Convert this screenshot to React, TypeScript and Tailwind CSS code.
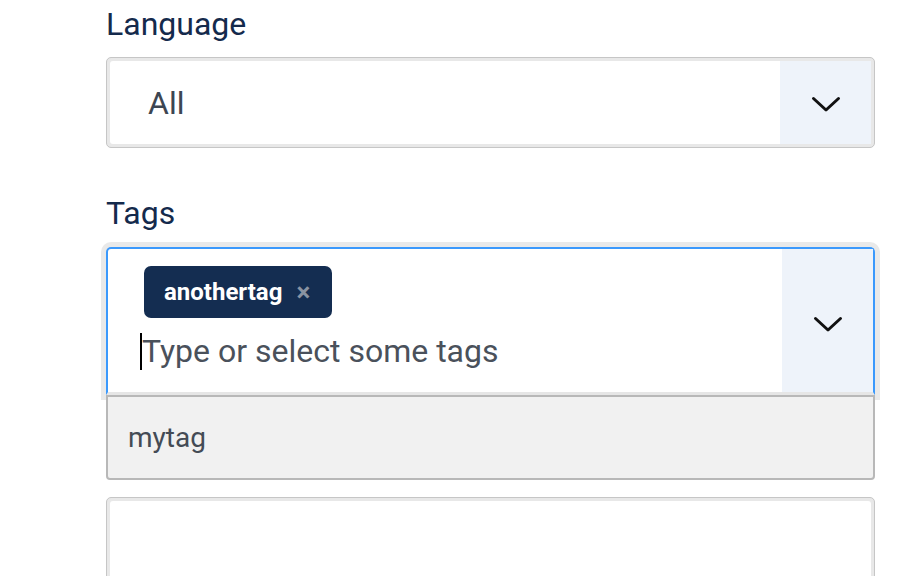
import React from "react";

function Chevron() {
  return (
    <svg width="30" height="18" viewBox="0 0 30 18" fill="none">
      <path d="M2.5 3.5 L15 15 L27.5 3.5" stroke="#111" strokeWidth="3" strokeLinecap="round" strokeLinejoin="round" />
    </svg>
  );
}

export default function App() {
  return (
    <div className="w-[920px] h-[576px] overflow-hidden bg-white font-['Roboto',sans-serif]">
      <div className="ml-[106px] w-[769px]">
        <div className="pt-[4px] text-[32px] leading-[40px] text-[#142a4c]">Language</div>

        <div className="mt-[13px] h-[91px] rounded-[5px] border border-[#c6c6c6] bg-[#e8e8e8] p-[3px]">
          <div className="flex h-full rounded-[3px] bg-white">
            <div className="flex flex-1 items-center pl-[38px] text-[32px] text-[#3d4652]">All</div>
            <div className="flex w-[91px] items-center justify-center bg-[#eef3fa] pt-[2px]">
              <Chevron />
            </div>
          </div>
        </div>

        <div className="mt-[45px] text-[32px] leading-[40px] text-[#142a4c]">Tags</div>

        <div className="mt-[14px] flex h-[148px] rounded-t-[5px] border-x-2 border-t-2 border-b-[3px] border-x-[#3b99fc] border-t-[#3b99fc] border-b-[#e6e6e6] bg-white shadow-[0_0_0_5px_#e9e9e9]">
          <div className="flex-1 pt-[17px]">
            <div className="ml-[36px] inline-flex h-[52px] items-center rounded-[7px] bg-[#142d51] pl-[20px] pr-[22px]">
              <span className="text-[24px] font-bold text-white">anothertag</span>
              <span className="ml-[14px] text-[26px] font-bold leading-none text-[#8a93a2]">×</span>
            </div>
            <div className="mt-[13px] flex h-[40px] items-center pl-[32px]">
              <span className="h-[37px] w-[2px] bg-black" />
              <span className="text-[32px] leading-[40px] text-[#4a515b]">Type or select some tags</span>
            </div>
          </div>
          <div className="flex w-[91px] items-center justify-center bg-[#eef3fa] pt-[6px]">
            <Chevron />
          </div>
        </div>

        <div className="relative flex h-[85px] items-center rounded-b-[4px] border-2 border-[#b8b8b8] bg-[#f1f1f1] pl-[20px]">
          <span className="text-[28px] text-[#444b55]">mytag</span>
        </div>

        <div className="mt-[17px] h-[120px] rounded-[5px] border border-[#c6c6c6] bg-[#e8e8e8] p-[3px]">
          <div className="h-full rounded-[3px] bg-white" />
        </div>
      </div>
    </div>
  );
}
